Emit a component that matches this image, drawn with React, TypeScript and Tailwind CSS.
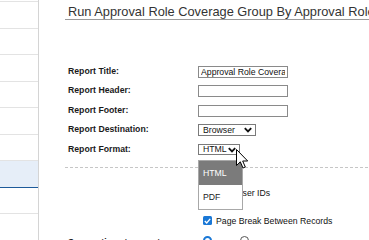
const sideRows = [0, 1, 2, 3, 4, 5, 6, 7, 8];

function Chevron() {
  return (
    <svg width="8" height="6" viewBox="0 0 8 6" className="shrink-0">
      <path d="M0.8 1.2 L4 4.4 L7.2 1.2" fill="none" stroke="#111" strokeWidth="1.9" />
    </svg>
  );
}

function FakeSelect({ value, width }: { value: string; width: string }) {
  return (
    <div className={`${width} h-[11.5px] border border-[#7a7a7a] bg-white flex items-center justify-between pl-[4px] pr-[3px] text-[8.7px] leading-none text-[#111]`}>
      <span>{value}</span>
      <Chevron />
    </div>
  );
}

function Row({ label, children }: { label: string; children?: React.ReactNode }) {
  return (
    <div className="flex items-center h-[19.5px]">
      <span className="w-[130px] shrink-0 text-[8.7px] font-bold text-[#1a1a1a]">{label}</span>
      {children}
    </div>
  );
}

export default function App() {
  return (
    <div className="relative flex w-[369px] h-[240px] overflow-hidden bg-white font-['Liberation_Sans',Arial,sans-serif]">
      <aside className="w-[39px] shrink-0 border-r border-[#d4d4d4]">
        <div className="h-[2px] border-b border-[#e3e3e3]" />
        {sideRows.map((i) => (
          <div
            key={i}
            className={
              i === 6
                ? 'h-[26.5px] bg-[#e6eef8] border-b border-[#1d5a9a]'
                : 'h-[26.5px] border-b border-[#e3e3e3]'
            }
          />
        ))}
      </aside>

      <main className="flex-1 min-w-0 pl-[26px]">
        <div className="pt-[5px] pl-[3px] border-b border-[#9a9a9a] h-[20px] whitespace-nowrap text-[12.8px] leading-[14px] text-[#333]">
          Run Approval Role Coverage Group By Approval Role
        </div>

        <div className="pl-[3px] pt-[41.75px]">
          <Row label="Report Title:">
            <input
              readOnly
              value="Approval Role Coverage Group By Approval Role"
              className="w-[90px] h-[12px] border border-[#8a8a8a] px-[2px] text-[8.7px] leading-none text-[#111] outline-none"
            />
          </Row>
          <Row label="Report Header:">
            <input readOnly className="w-[90px] h-[12px] border border-[#8a8a8a] outline-none" />
          </Row>
          <Row label="Report Footer:">
            <input readOnly className="w-[90px] h-[12px] border border-[#8a8a8a] outline-none" />
          </Row>
          <Row label="Report Destination:">
            <FakeSelect value="Browser" width="w-[58px]" />
          </Row>
          <Row label="Report Format:">
            <FakeSelect value="HTML" width="w-[42px]" />
          </Row>
        </div>

        <div className="mt-[7.5px] h-px bg-[linear-gradient(to_right,#c6c6c6_60%,transparent_0)] bg-[length:5px_1px]" />

        <div className="pl-[138px] pt-[20px] flex flex-col gap-[17px] text-[8.7px] leading-[10px] text-[#111]">
          <label className="flex items-center gap-[4px]">
            <span className="w-[9px] h-[9px] border border-[#555] bg-white rounded-[1px]" />
            <span>Print User IDs</span>
          </label>
          <label className="flex items-center gap-[4px] translate-y-px">
            <span className="w-[9px] h-[9px] rounded-[1.5px] bg-[#1a78d6] flex items-center justify-center">
              <svg width="7" height="6" viewBox="0 0 7 6">
                <path d="M0.8 3 L2.7 4.9 L6.2 0.9" fill="none" stroke="#fff" strokeWidth="1.4" />
              </svg>
            </span>
            <span>Page Break Between Records</span>
          </label>
        </div>

        <div className="pl-[3px] pt-[11px] flex items-start">
          <span className="w-[135px] shrink-0 text-[8.7px] font-bold text-[#1a1a1a]">Save options to report:</span>
          <span className="w-[9px] h-[9px] rounded-full border-[2.5px] border-[#1a78d6] bg-white" />
          <span className="ml-[28px] w-[9px] h-[9px] rounded-full border border-[#555] bg-white" />
        </div>
      </main>

      <div className="absolute left-[198px] top-[160px] w-[45px] h-[50px] border border-[#a8a8a8] bg-white text-[8.7px] leading-none">
        <div className="h-[24px] bg-[#7b7b7b] text-white flex items-center pl-[4px]">HTML</div>
        <div className="h-[24px] text-[#222] flex items-center pl-[4px]">PDF</div>
      </div>

      <svg className="absolute left-[236px] top-[149px]" width="13" height="21" viewBox="0 0 13 21">
        <path d="M0.5 0.5 L0.5 16.5 L4.3 12.8 L7 19 L9.3 18 L6.7 12 L11.7 12 Z" fill="#fff" stroke="#000" strokeWidth="1" strokeLinejoin="round" />
      </svg>
    </div>
  );
}
